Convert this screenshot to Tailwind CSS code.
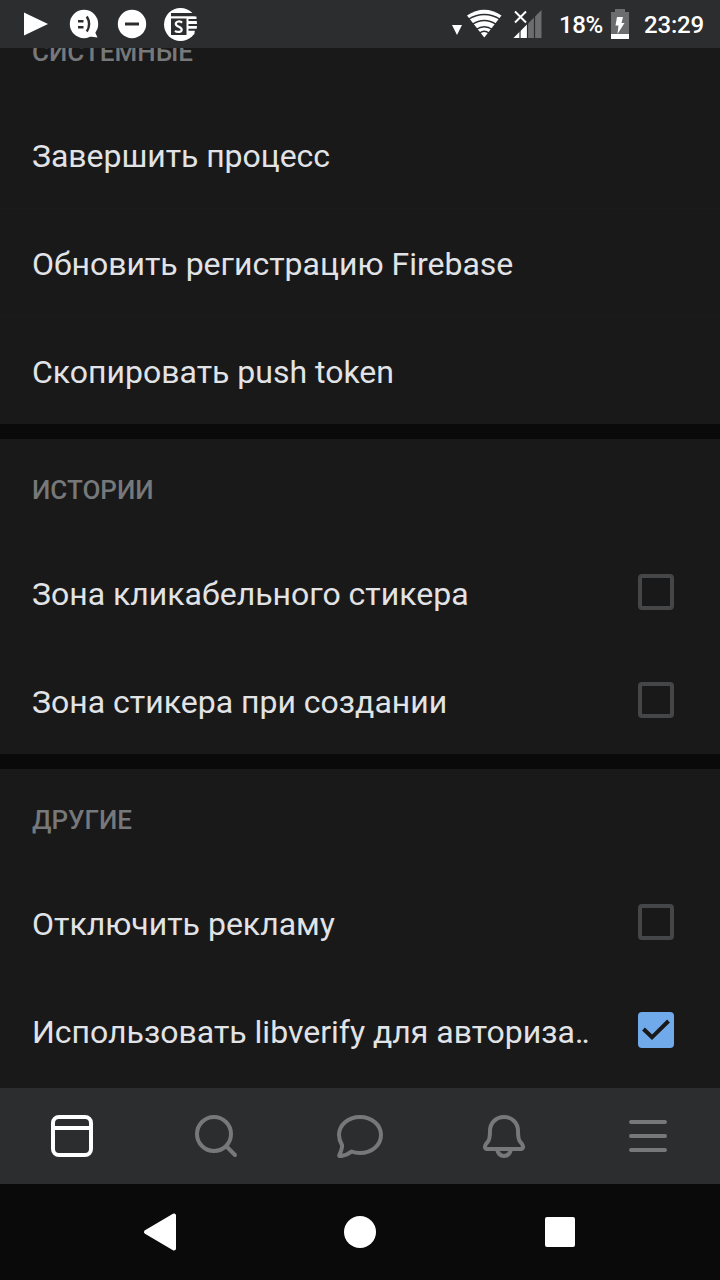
<!DOCTYPE html>
<html lang="ru">
<head>
<meta charset="utf-8">
<title>Настройки</title>
<script src="https://cdn.jsdelivr.net/npm/@tailwindcss/browser@4"></script>
</head>
<body class="bg-[#0a0a0a]">
<div class="w-[720px] h-[1280px] flex flex-col overflow-hidden font-['Roboto',sans-serif] text-[#e1e3e6]">
  <header class="h-12 shrink-0 bg-[#2c2d2e] text-white flex items-center z-10">
    <svg class="w-[220px] h-12" viewBox="0 0 220 48" fill="#fff">
      <path d="M24 12.500L48 24L24 35.500Z"/>
      <circle cx="84" cy="24" r="14.200"/><path d="M97 26L95 32L97.500 37.500L86 36Z"/>
      <path d="M78 21.300h5.500M78 27.200h5.500M86.800 16.500q4.600 7.500 0 15" fill="none" stroke="#2c2d2e" stroke-width="2.400"/>
      <circle cx="132" cy="24" r="14.200"/><path d="M125 22.500h14v3h-14z" fill="#2c2d2e"/>
      <circle cx="180.500" cy="24.500" r="16.500"/>
      <path d="M188 16.500h8.500v18h-8.500z"/>
      <path d="M171 13h24v3.200h-24zM171 18.500h15.500V35H171zM188.500 19h9v2h-9zM188.500 24h9v2h-9zM188.500 28.800h9v2h-9zM195 30l3 0v6h-4z" fill="#2c2d2e"/>
      <path d="M182 22.700C180.500 20.800 175.800 21 175.800 24C175.800 27 181.700 26.500 181.700 29.500C181.700 32.500 177 32.500 175 30.800" fill="none" stroke="#fff" stroke-width="2.200"/>
    </svg>
    <svg class="w-[100px] h-12 ml-[230px]" viewBox="450 0 100 48" fill="#fff">
      <path d="M452 25h10l-5 10z"/>
      <path d="M467 15.500Q484.300 4 501.500 15.500L484.300 37.500Z"/>
      <path d="M468 19.500Q484.300 9.500 500.500 19.500M472 24.500Q484.300 16.500 496.500 24.500M476 29.500Q484.300 24 492.500 29.500M479.500 33Q484.300 29.500 489 33" fill="none" stroke="#2c2d2e" stroke-width="1.300"/>
      <path d="M541.500 10V38H513.500Z" fill="#6c6d6e"/><path d="M527 24.500V38H513.500Z"/>
      <path d="M513 10h14v13h-14z" fill="#2c2d2e"/>
      <path d="M520 29v9M527.500 20v18M534.500 14v24" stroke="#2c2d2e" stroke-width="1.200"/>
      <path d="M515 11.500l11 11M526 11.500l-11 11" stroke="#fff" stroke-width="2"/>
    </svg>
    <span class="ml-[9px] w-[46px] text-[24px] font-medium tracking-[-0.4px] whitespace-nowrap leading-12 pt-[2px]">18%</span>
    <svg class="w-5 h-12 ml-[5px]" viewBox="610 0 20 48">
      <path d="M615 9h10v3h4v27h-18V12h4z" fill="#6c6d6e"/><path d="M611 34h18v5h-18z" fill="#fff"/>
      <path d="M617 17h6l-1.500 6h3L617.500 34l1-8.500h-3z" fill="#fff"/>
    </svg>
    <span class="ml-[14px] text-[24px] font-medium tracking-[-0.2px] whitespace-nowrap leading-12 pt-[2px]">23:29</span>
  </header>

  <main class="h-[1040px] shrink-0 overflow-hidden">
    <div class="-mt-[47px] flex flex-col gap-[15px] text-[32px]">
      <section class="bg-[#191919]">
        <h2 class="h-[99px] px-8 pt-[3px] flex items-center text-[26px] font-medium text-[#76787a]">СИСТЕМНЫЕ</h2>
        <div class="h-27 px-8 flex items-center"><span class="pt-[3px] tracking-[-0.05px]">Завершить процесс</span></div>
        <div class="h-27 px-8 flex items-center border-t border-[#1b1b1b]"><span class="pt-[2px]">Обновить регистрацию Firebase</span></div>
        <div class="h-27 px-8 flex items-center border-t border-[#1b1b1b]"><span class="pt-[2px]">Скопировать push token</span></div>
      </section>
      <section class="bg-[#191919]">
        <h2 class="h-[99px] px-8 pt-[3px] flex items-center text-[26px] font-medium text-[#76787a]">ИСТОРИИ</h2>
        <div class="h-27 pl-8 pr-[46px] flex items-center justify-between"><span class="pt-[3px]">Зона кликабельного стикера</span><i class="size-9 rounded-[4px] border-4 border-[#454647]"></i></div>
        <div class="h-27 pl-8 pr-[46px] flex items-center justify-between"><span class="pt-[3px]">Зона стикера при создании</span><i class="size-9 rounded-[4px] border-4 border-[#454647]"></i></div>
      </section>
      <section class="bg-[#191919] h-[330px]">
        <h2 class="h-[99px] px-8 pt-[3px] flex items-center text-[26px] font-medium text-[#76787a]">ДРУГИЕ</h2>
        <div class="h-27 pl-8 pr-[46px] flex items-center justify-between"><span class="pt-[3px]">Отключить рекламу</span><i class="size-9 rounded-[4px] border-4 border-[#454647]"></i></div>
        <div class="h-27 pl-8 pr-[46px] flex items-center justify-between"><span class="pt-[3px]">Использовать libverify для авториза<span class="tracking-[-1.8px]">..</span></span>
          <svg class="size-9 rounded-[4px] bg-[#71aaeb]" viewBox="0 0 36 36" fill="none" stroke="#191919" stroke-width="4"><path d="M5.500 17l8.500 8.300L30.500 9"/></svg></div>
      </section>
    </div>
  </main>

  <nav class="h-24 shrink-0 bg-[#2c2d2e] grid grid-cols-5 text-[#76787a]">
    <svg class="w-36 h-24 text-white" viewBox="0 0 144 96" fill="none" stroke="currentColor" stroke-width="4"><rect x="53" y="29" width="38" height="38" rx="6"/><path d="M53 40h38"/></svg>
    <svg class="w-36 h-24" viewBox="0 0 144 96" fill="none" stroke="currentColor" stroke-width="4" stroke-linecap="round"><circle cx="70" cy="46" r="17"/><path d="M82.500 58.500l8.500 8.500"/></svg>
    <svg class="w-36 h-24" viewBox="288 0 144 96" fill="none" stroke="currentColor" stroke-width="4" stroke-linejoin="round"><path d="M360 29C348 29 339 37 339 47C339 51 340.500 54.500 342 57C342.500 60.500 340.500 64.500 339.300 67C338.700 68.300 340 68.200 341 68C345 67.400 348 66.500 351.500 63.500C354 64.500 357 65 360 65C372 65 381 57 381 47C381 37 372 29 360 29Z"/></svg>
    <svg class="w-36 h-24" viewBox="432 0 144 96" fill="none" stroke="currentColor" stroke-width="4" stroke-linejoin="round"><path d="M504 29C496 29 490 35 490 43C490 48 490 51 488 53.500L486 56C484 59 485 61 488 61H520C523 61 524 59 522 56L520 53.500C518 51 518 48 518 43C518 35 512 29 504 29Z"/><path d="M497 61C498 66 501 68 504 68C507 68 510 66 511 61"/></svg>
    <svg class="w-36 h-24" viewBox="0 0 144 96" fill="none" stroke="currentColor" stroke-width="4" stroke-linecap="round"><path d="M55 34h34M55 48h34M55 62h34"/></svg>
  </nav>

  <footer class="h-24 shrink-0 bg-[#0a0a0a]">
    <svg class="w-[720px] h-24" viewBox="0 0 720 96" fill="#fff" stroke="#fff" stroke-linejoin="round">
      <path d="M146 48L174 31.500V64.500Z" stroke-width="4"/><circle cx="360" cy="48" r="16" stroke="none"/><rect x="545" y="33" width="30" height="30" rx="2" stroke="none"/>
    </svg>
  </footer>
</div>
</body>
</html>
